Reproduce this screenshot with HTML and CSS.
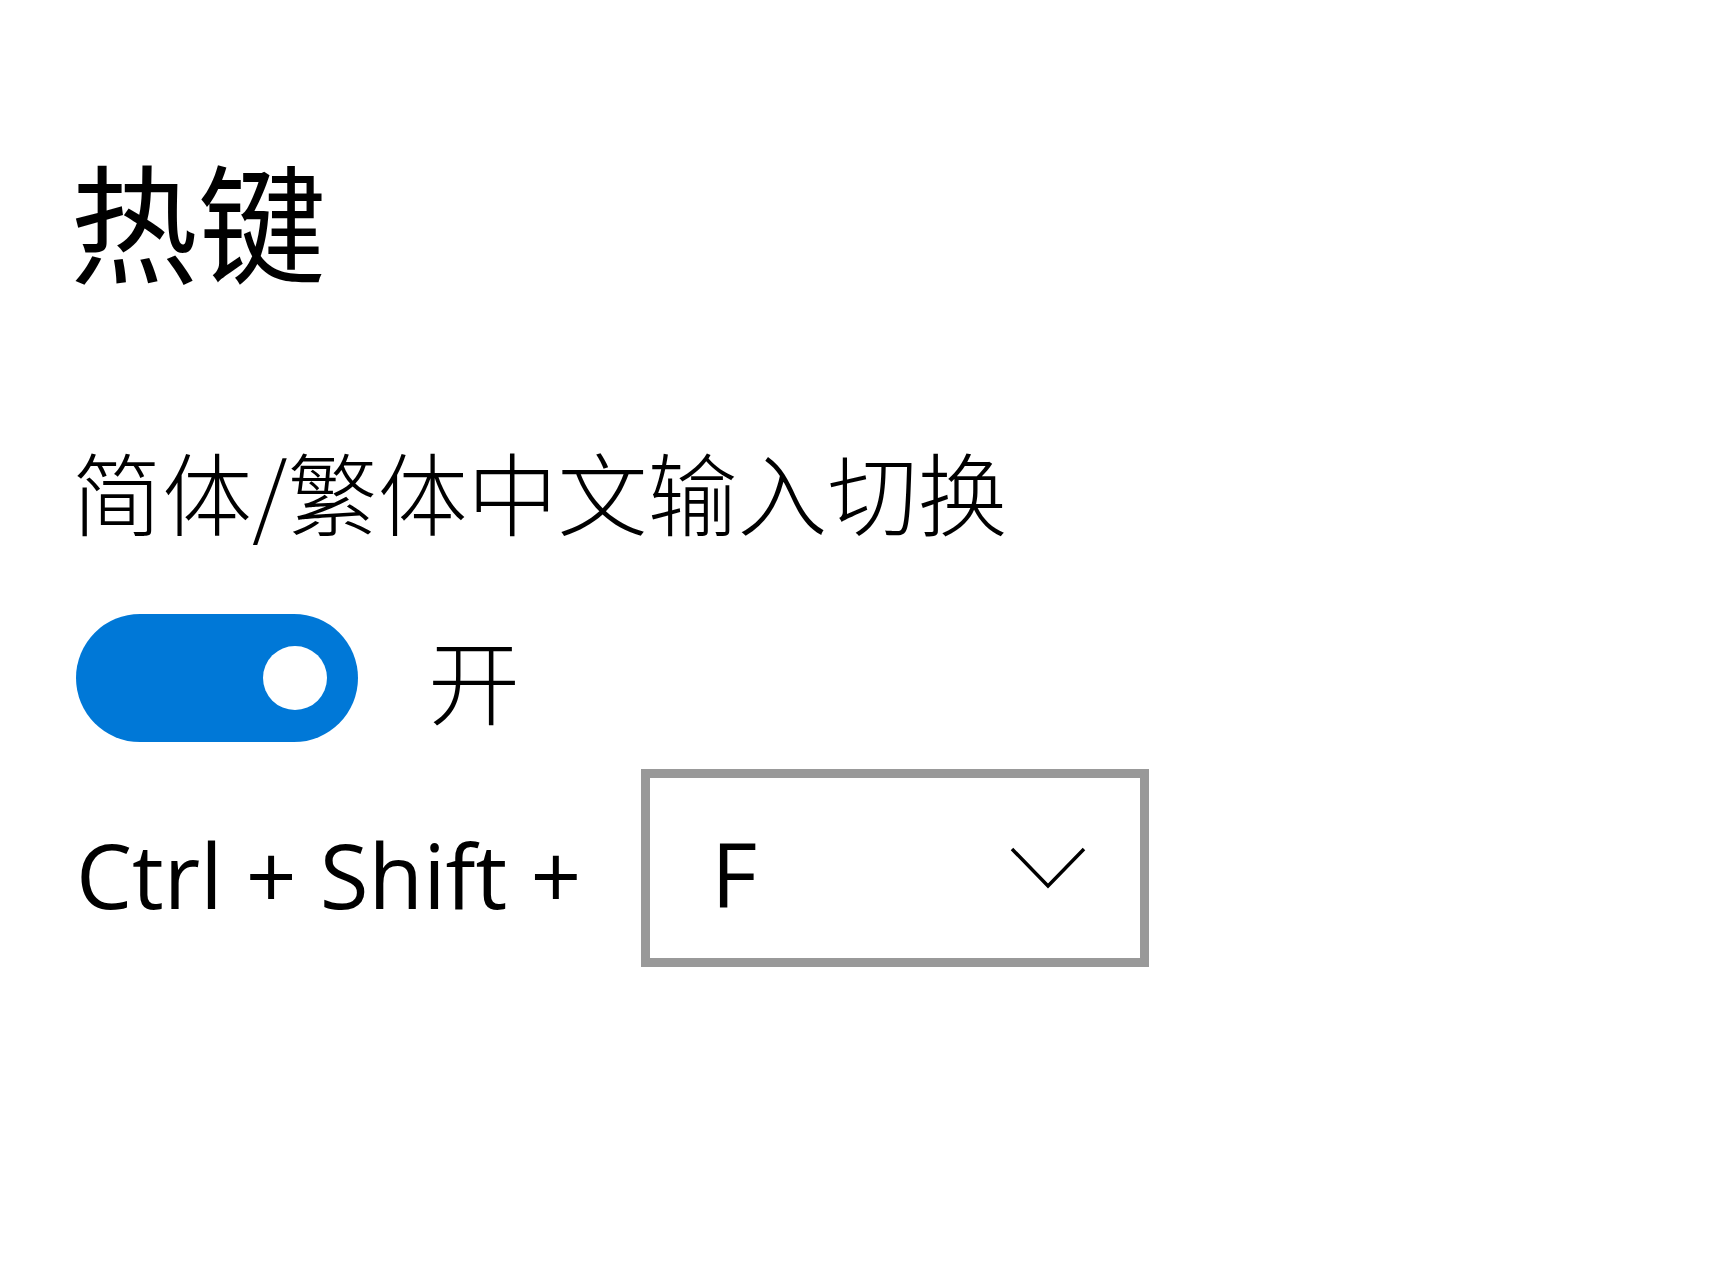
FILE: index.html
```html
<!DOCTYPE html>
<html>
<head>
  <title>热键</title>
  <link rel="stylesheet" href="styles.css">
</head>
<body>
  <div class="page">
    <h1 class="title">热键</h1>

    <div class="setting">
      <div class="label">简体/繁体中文输入切换</div>

      <div class="toggle-row">
        <div class="toggle on"><span class="knob"></span></div>
        <span class="state">开</span>
      </div>

      <div class="hotkey-row">
        <span class="keys">Ctrl + Shift +</span>
        <div class="select">
          <span class="value">F</span>
          <svg class="chevron" width="76" height="42" viewBox="0 0 76 42">
            <path d="M2 2 L38 39 L74 2" fill="none" stroke="#000" stroke-width="3.5"/>
          </svg>
        </div>
      </div>
    </div>
  </div>
</body>
</html>
```

FILE: styles.css
```css
body {
  margin: 0;
  padding: 0;
  background-color: #fff;
  color: #000;
  font-family: 'Noto Sans CJK SC', 'Open Sans', sans-serif;
}

.page {
  padding: 155px 0 0 76px;
}

.title {
  margin: 0 0 0 -6px;
  font-size: 128px;
  font-weight: 400;
  line-height: 1;
}

.setting {
  margin-top: 162px;
}

.label {
  margin-left: -4px;
  font-size: 90px;
  font-weight: 300;
  line-height: 1;
}

.toggle-row {
  display: flex;
  align-items: center;
  margin-top: 79px;
}

.toggle {
  width: 282px;
  height: 128px;
  box-sizing: border-box;
  border-radius: 64px;
  background-color: #0078d7;
  display: flex;
  align-items: center;
  justify-content: flex-end;
  padding-right: 31px;
}

.knob {
  width: 64px;
  height: 64px;
  border-radius: 50%;
  background-color: #fff;
}

.state {
  margin-left: 70px;
  font-size: 92px;
  font-weight: 300;
  line-height: 1;
}

.hotkey-row {
  display: flex;
  align-items: center;
  margin-top: 27px;
}

.keys {
  padding-top: 12px;
  font-family: 'Open Sans', sans-serif;
  font-size: 89px;
  line-height: 1;
}

.select {
  margin-left: 60px;
  width: 508px;
  height: 198px;
  box-sizing: border-box;
  border: 9px solid #999;
  display: flex;
  align-items: center;
  justify-content: space-between;
  padding: 0 54px 0 61px;
}

.value {
  padding-top: 10px;
  font-family: 'Open Sans', sans-serif;
  font-size: 89px;
  line-height: 1;
}
```
